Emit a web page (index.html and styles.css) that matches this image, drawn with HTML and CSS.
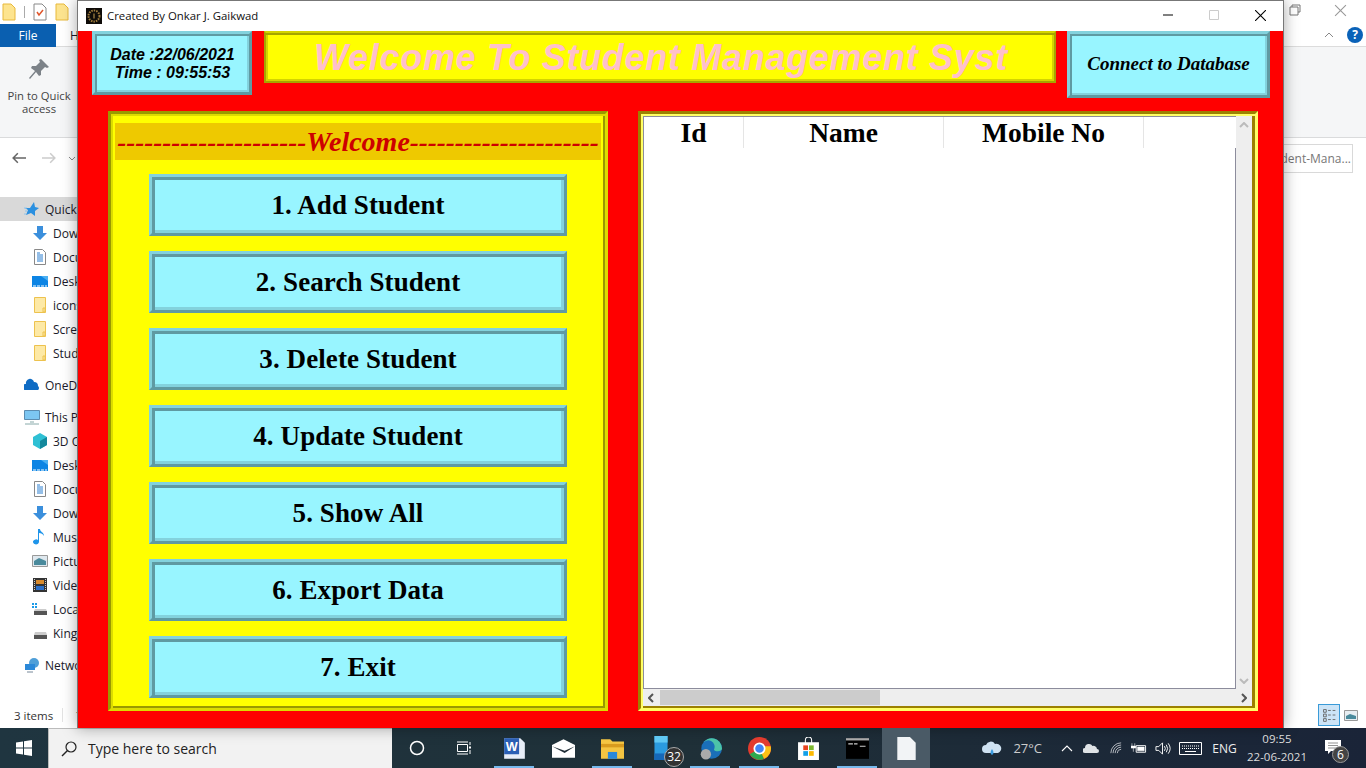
FILE: index.html
```html
<!DOCTYPE html>
<html lang="en">
<head>
    <meta charset="UTF-8">
    <title>Student Management System</title>
    <link rel="stylesheet" href="styles.css">
</head>
<body>
    <div class="desktop">
        <!-- explorer window behind the app -->
        <div class="explorer">
            <div class="ex-title">
                <svg class="ex-ico" viewBox="0 0 14 18"><path d="M1 1h8l4 4v12H1z" fill="#fde48f" stroke="#e8b93c"/></svg>
                <span class="ex-sep"></span>
                <svg class="ex-ico" viewBox="0 0 14 18"><path d="M1 1h8l4 4v12H1z" fill="#fff" stroke="#888"/><path d="M4 9l2 3 4-5" fill="none" stroke="#e0552b" stroke-width="1.5"/></svg>
                <svg class="ex-ico" viewBox="0 0 14 18"><path d="M1 1h8l4 4v12H1z" fill="#fde48f" stroke="#e8b93c"/></svg>
                <svg class="ex-restore" viewBox="0 0 12 12"><path d="M3 3V1h8v7H9M1 3h8v8H1z" fill="none" stroke="#777"/></svg>
                <svg class="ex-close" viewBox="0 0 12 12"><path d="M1 1l10 10M11 1L1 11" stroke="#999" fill="none"/></svg>
            </div>
            <div class="ex-tabs">
                <span class="file-tab">File</span>
                <span class="home-tab">H</span>
                <svg class="ex-up" viewBox="0 0 10 6"><path d="M1 5l4-4 4 4" fill="none" stroke="#888"/></svg>
                <svg class="ex-help" viewBox="0 0 16 16"><circle cx="8" cy="8" r="8" fill="#0a62b8"/><text x="8" y="12" text-anchor="middle" class="help-mark">?</text></svg>
            </div>
            <div class="ex-ribbon">
                <div class="pin">
                    <svg viewBox="0 0 22 22" class="pin-ico"><path d="M13 1l8 8-2 1-2-1-4 4 0 4-2 1-3-4-6 7-1-1 6-7-4-3 1-2h4l4-4-1-2z" fill="#7c8288"/></svg>
                    <span>Pin to Quick<br>access</span>
                </div>
            </div>
            <div class="ex-nav">
                <svg viewBox="0 0 12 10" class="nav-arrow"><path d="M5 1L1 5l4 4M1 5h11" fill="none" stroke="#666" stroke-width="1.3"/></svg>
                <svg viewBox="0 0 12 10" class="nav-arrow"><path d="M7 1l4 4-4 4M11 5H0" fill="none" stroke="#ccc" stroke-width="1.3"/></svg>
                <svg viewBox="0 0 8 5" class="nav-down"><path d="M1 1l3 3 3-3" fill="none" stroke="#888"/></svg>
                <span class="search-box">dent-Mana...</span>
            </div>
            <ul class="tree">
                <li class="top active"><svg viewBox="0 0 16 16"><path d="M10 1l1 5 4 1-4 3 0 5-4-3-5 2 2-5-3-2h5z" fill="#2b90e0"/><path d="M0 7h3M1 10h2M0 13h2" stroke="#8cc4ee"/></svg>Quick access</li>
                <li class="sub"><svg viewBox="0 0 16 16"><path d="M5 1h6v7h4l-7 7-7-7h4z" fill="#3b8fdc"/></svg>Downloads</li>
                <li class="sub"><svg viewBox="0 0 16 16"><path d="M2.500 .5h8l3 3v12h-11z" fill="#fff" stroke="#888"/><path d="M5 4h3M5 6h6M5 8h6M5 10h6M5 12h6" stroke="#2b7fd0"/></svg>Documents</li>
                <li class="sub"><svg viewBox="0 0 16 16"><path d="M0 3h16v11H0z" fill="#0c84e4"/><path d="M1 13h14" stroke="#fff" stroke-dasharray="3 1"/><path d="M9 3h7v5z" fill="#4cb0f2"/></svg>Desktop</li>
                <li class="sub"><svg viewBox="0 0 16 16"><path d="M2.500 .5h11v15h-11z" fill="#fde9a6" stroke="#edc24e"/><path d="M11 11h2v4h-2z" fill="none" stroke="#edc24e"/></svg>icons</li>
                <li class="sub"><svg viewBox="0 0 16 16"><path d="M2.500 .5h11v15h-11z" fill="#fde9a6" stroke="#edc24e"/><path d="M11 11h2v4h-2z" fill="none" stroke="#edc24e"/></svg>Screenshots</li>
                <li class="sub"><svg viewBox="0 0 16 16"><path d="M2.500 .5h11v15h-11z" fill="#fde9a6" stroke="#edc24e"/><path d="M11 11h2v4h-2z" fill="none" stroke="#edc24e"/></svg>Student</li>
                <li class="top gap"><svg viewBox="0 0 16 16"><path d="M1 13a3 3 0 0 1 1-6 4 4 0 0 1 8-2 4 4 0 0 1 4 4 2.500 2.500 0 0 1 0 4z" fill="#0f6cc4"/></svg>OneDrive</li>
                <li class="top gap"><svg viewBox="0 0 16 16"><path d="M.5 1.500h15v9H.5z" fill="#7cc6f2" stroke="#5c8cb0"/><path d="M6 13h4M1 15h14" stroke="#8aa"/></svg>This PC</li>
                <li class="sub"><svg viewBox="0 0 16 16"><path d="M8 0l7 4v8l-7 4-7-4V4z" fill="#2fc0d4"/><path d="M8 8l7-4v8l-7 4z" fill="#14889c"/></svg>3D Objects</li>
                <li class="sub"><svg viewBox="0 0 16 16"><path d="M0 3h16v11H0z" fill="#0c84e4"/><path d="M1 13h14" stroke="#fff" stroke-dasharray="3 1"/><path d="M9 3h7v5z" fill="#4cb0f2"/></svg>Desktop</li>
                <li class="sub"><svg viewBox="0 0 16 16"><path d="M2.500 .5h8l3 3v12h-11z" fill="#fff" stroke="#888"/><path d="M5 4h3M5 6h6M5 8h6M5 10h6M5 12h6" stroke="#2b7fd0"/></svg>Documents</li>
                <li class="sub"><svg viewBox="0 0 16 16"><path d="M5 1h6v7h4l-7 7-7-7h4z" fill="#3b8fdc"/></svg>Downloads</li>
                <li class="sub"><svg viewBox="0 0 16 16"><path d="M7 13a3 2.500 0 1 1-1-2V0h2c0 3 4 3 4 7-1-2-3-3-5-3z" fill="#1f95ea"/></svg>Music</li>
                <li class="sub"><svg viewBox="0 0 16 16"><path d="M.5 2.500h15v11H.5z" fill="#dfe8ee" stroke="#999"/><path d="M2 8l5-3 7 3v4H2z" fill="#4a8a9c"/></svg>Pictures</li>
                <li class="sub"><svg viewBox="0 0 16 16"><path d="M1 1h14v14H1z" fill="#333"/><path d="M4 3h8v4H4z" fill="#d98a2b"/><path d="M4 9h8v4H4z" fill="#2b6fc8"/><path d="M2.500 2v12M13.500 2v12" stroke="#ccc" stroke-dasharray="1 1"/></svg>Videos</li>
                <li class="sub"><svg viewBox="0 0 16 16"><path d="M0 2h2v2H0zM3 2h2v2H3zM0 5h2v2H0zM3 5h2v2H3z" fill="#1c9be8"/><path d="M2 10h13v4H2z" fill="#555"/><path d="M3 8h11l1 2H2z" fill="#ccc"/></svg>Local Disk</li>
                <li class="sub"><svg viewBox="0 0 16 16"><path d="M2 10h13v4H2z" fill="#555"/><path d="M3 7h11l1 3H2z" fill="#ccc"/></svg>Kingston</li>
                <li class="top gap"><svg viewBox="0 0 16 16"><circle cx="10" cy="6" r="5" fill="#4f9fd8"/><path d="M1 7h10v6H1z" fill="#2b88d8"/><path d="M3 15h6" stroke="#789"/></svg>Network</li>
            </ul>
            <div class="ex-status">
                <span>3 items</span><span class="status-sep">1</span>
                <div class="views">
                    <svg class="view on" viewBox="0 0 22 22"><path d="M5 5h3v3H5zM5 10h3v3H5zM5 15h3v3H5z" fill="none" stroke="#666"/><path d="M10 6h3M15 6h3M10 11h3M15 11h3M10 16h3M15 16h3" stroke="#666"/></svg>
                    <svg class="view" viewBox="0 0 14 11"><path d="M.5 .5h13v10H.5z" fill="#e8eef2" stroke="#999"/><path d="M2 6l4-2 6 2v3H2z" fill="#4a8a9c"/></svg>
                </div>
            </div>
        </div>

        <!-- student management window -->
        <div class="app">
            <div class="app-title">
                <svg class="app-logo" viewBox="0 0 16 16"><path d="M0 0h16v16H0z" fill="#0e0b08"/><circle cx="8" cy="8" r="5.500" fill="none" stroke="#a07c3c" stroke-width="2" stroke-dasharray="1.500 1"/><path d="M8 5.500v5" stroke="#c8a050"/></svg>
                <span class="app-name">Created By Onkar J. Gaikwad</span>
                <div class="win-btns">
                    <svg viewBox="0 0 10 10" class="win-btn"><path d="M0 5h10" stroke="#000"/></svg>
                    <svg viewBox="0 0 10 10" class="win-btn"><path d="M.5 .5h9v9h-9z" fill="none" stroke="#ccc"/></svg>
                    <svg viewBox="0 0 10 10" class="win-btn"><path d="M0 0l10 10M10 0L0 10" stroke="#000" fill="none"/></svg>
                </div>
            </div>
            <div class="app-body">
                <header class="top-row">
                    <div class="ridge date-box">Date :22/06/2021<br>Time : 09:55:53</div>
                    <div class="heading"><span class="heading-text">Welcome To Student Management Syst</span></div>
                    <div class="ridge connect">Connect to Database</div>
                </header>
                <main class="panels">
                    <section class="panel menu">
                        <div class="menu-title"><span class="dashes">---------------------</span>Welcome<span class="dashes">---------------------</span></div>
                        <div class="ridge btn">1. Add Student</div>
                        <div class="ridge btn">2. Search Student</div>
                        <div class="ridge btn">3. Delete Student</div>
                        <div class="ridge btn">4. Update Student</div>
                        <div class="ridge btn">5. Show All</div>
                        <div class="ridge btn">6. Export Data</div>
                        <div class="ridge btn">7. Exit</div>
                    </section>
                    <section class="panel records">
                        <div class="grid-row">
                            <div class="table">
                                <div class="thead">
                                    <div class="th">Id</div>
                                    <div class="th wide">Name</div>
                                    <div class="th wide">Mobile No</div>
                                </div>
                                <div class="tbody"></div>
                            </div>
                            <div class="vscroll">
                                <svg viewBox="0 0 10 6" class="chev"><path d="M1 5l4-4 4 4" fill="none" stroke="#bbb" stroke-width="2"/></svg>
                                <svg viewBox="0 0 10 6" class="chev"><path d="M1 1l4 4 4-4" fill="none" stroke="#bbb" stroke-width="2"/></svg>
                            </div>
                        </div>
                        <div class="hscroll">
                            <svg viewBox="0 0 6 10" class="chev-h"><path d="M5 1L1 5l4 4" fill="none" stroke="#555" stroke-width="2"/></svg>
                            <div class="hthumb"></div>
                            <svg viewBox="0 0 6 10" class="chev-h end"><path d="M1 1l4 4-4 4" fill="none" stroke="#555" stroke-width="2"/></svg>
                        </div>
                    </section>
                </main>
            </div>
        </div>

        <!-- taskbar -->
        <footer class="taskbar">
            <div class="start"><svg viewBox="0 0 16 16" class="win-logo"><path d="M0 2.500l7-1v6H0zM8 1.300L16 0v7.500H8zM0 8.500h7v6l-7-1zM8 8.500h8V16l-8-1.200z" fill="#fff"/></svg></div>
            <div class="search">
                <svg viewBox="0 0 16 16" class="search-ico"><circle cx="10" cy="6" r="5" fill="none" stroke="#222" stroke-width="1.200"/><path d="M6.500 9.500L1 15" stroke="#222" stroke-width="1.400"/></svg>
                <span>Type here to search</span>
            </div>
            <div class="task-icons">
                <div class="task"><svg viewBox="0 0 16 16" class="t-ico"><circle cx="8" cy="8" r="6.500" fill="none" stroke="#fff" stroke-width="1.500"/></svg></div>
                <div class="task"><svg viewBox="0 0 16 16" class="t-ico task-view"><path d="M1.500 4.500h10v7h-10zM1 2h11M1 14h11M14 2v3M14 10v4" fill="none" stroke="#fff"/><path d="M13 6.500h2v2h-2z" fill="#fff"/></svg></div>
                <div class="task open"><svg viewBox="0 0 20 20" class="t-ico big"><path d="M1 1h14l4 4v14H1z" fill="#e8eef8"/><path d="M1 1h13v14H1z" fill="#2b5fb4"/><text x="7.500" y="12" text-anchor="middle" class="word-mark">W</text></svg></div>
                <div class="task"><svg viewBox="0 0 20 16" class="t-ico big"><path d="M0 5l10-5 10 5v11H0z" fill="#fff"/><path d="M0 6l11 4 9-4-9 6z" fill="#1f2d36"/></svg></div>
                <div class="task open split"><svg viewBox="0 0 20 18" class="t-ico big"><path d="M0 1h8l2 2h10v15H0z" fill="#f4c542"/><path d="M0 5h20v3H0z" fill="#d89b1e"/><path d="M6 12h8v6H6z" fill="#2b88d8"/></svg></div>
                <div class="task phone"><svg viewBox="0 0 12 22" class="phone-ico"><path d="M0 0h12v22H0z" fill="#2b9be0"/><path d="M0 0h12v6H0z" fill="#60c8f4"/><path d="M0 16h12v6H0z" fill="#1668b8"/></svg><span class="count">32</span></div>
                <div class="task open"><svg viewBox="0 0 20 20" class="t-ico big"><circle cx="11" cy="10" r="9" fill="#1a6fb8"/><path d="M3 6a9 9 0 0 1 17 4c0 3-6 3-7 1a4 4 0 0 0-10-5z" fill="#4cc4a8"/><circle cx="6" cy="15" r="4.500" fill="#aaa"/></svg></div>
                <div class="task open"><svg viewBox="0 0 20 20" class="t-ico big"><circle cx="10" cy="10" r="10" fill="#e33b2e"/><path d="M10 10L1.500 15A10 10 0 0 0 14 19z" fill="#2da94f"/><path d="M10 10l4 9A10 10 0 0 0 19.800 8H10z" fill="#fbc116"/><circle cx="10" cy="10" r="4.500" fill="#4285f4" stroke="#fff" stroke-width="1.500"/></svg></div>
                <div class="task"><svg viewBox="0 0 20 22" class="t-ico big"><path d="M7 6V3a3 3 0 0 1 6 0v3" fill="none" stroke="#fff"/><path d="M0 5h20v17H0z" fill="#fff"/><path d="M5 8h4.500v4.500H5z" fill="#e8431f"/><path d="M10.500 8H15v4.500h-4.500z" fill="#7cb82f"/><path d="M5 13.500h4.500V18H5z" fill="#14a0e8"/><path d="M10.500 13.500H15V18h-4.500z" fill="#fdb900"/></svg></div>
                <div class="task open"><svg viewBox="0 0 20 18" class="t-ico big"><path d="M0 0h20v18H0z" fill="#000"/><path d="M0 0h20v2H0z" fill="#aaa"/><path d="M2 5h4M7 5h3M12 7h5" stroke="#ccc"/></svg></div>
                <div class="task current"><svg viewBox="0 0 16 20" class="t-ico big"><path d="M0 0h11l5 5v15H0z" fill="#f2f4f6"/></svg></div>
            </div>
            <div class="tray">
                <svg viewBox="0 0 20 16" class="tray-ico cloud"><path d="M4 13a4 4 0 0 1 0-8 5 5 0 0 1 9-1 4.500 4.500 0 0 1 3 9z" fill="#cfe2f2"/><path d="M10 9c2 3 2 5 0 6-2-1-2-3 0-6z" fill="#3a9be0"/></svg>
                <span class="temp">27°C</span>
                <svg viewBox="0 0 12 7" class="tray-ico caret"><path d="M1 6l5-5 5 5" fill="none" stroke="#fff" stroke-width="1.100"/></svg>
                <svg viewBox="0 0 16 10" class="tray-ico onedrive"><path d="M2 10a2.500 2.500 0 0 1 0-5 4 4 0 0 1 7.500-2A3.500 3.500 0 0 1 14 6a2 2 0 0 1 0 4z" fill="#dfe3e6"/></svg>
                <svg viewBox="0 0 14 14" class="tray-ico wifi"><path d="M1 13a12 12 0 0 1 12-12M3.500 13A9.500 9.500 0 0 1 13 3.500M6 13a7 7 0 0 1 7-7M8.500 13A4.500 4.500 0 0 1 13 8.500" fill="none" stroke="#c8ccd0"/></svg>
                <svg viewBox="0 0 17 12" class="tray-ico battery"><path d="M5.500 3.500h10v7h-10z" fill="none" stroke="#fff"/><path d="M7 5h7v4H7zM1 1v3M4 1v3M0 4h5v2H0zM2.500 6v4" fill="#fff" stroke="#fff" stroke-width=".6"/></svg>
                <svg viewBox="0 0 17 13" class="tray-ico speaker"><path d="M1 4.500h3l4-4v12l-4-4H1z" fill="none" stroke="#fff"/><path d="M10 4a4 4 0 0 1 0 5M12 2.500a7 7 0 0 1 0 8M14 1a9 9 0 0 1 0 11" fill="none" stroke="#fff"/></svg>
                <svg viewBox="0 0 23 13" class="tray-ico keyboard"><path d="M.5 .5h22v12H.5z" fill="none" stroke="#fff"/><path d="M3 4h17M3 6.500h17" stroke="#fff" stroke-dasharray="1 1"/><path d="M6 9.500h11" stroke="#fff"/></svg>
                <span class="lang">ENG</span>
                <div class="clock"><span>09:55</span><span>22-06-2021</span></div>
                <div class="notify">
                    <svg viewBox="0 0 16 14" class="note"><path d="M0 0h16v11H6l-3 3v-3H0z" fill="#fff"/><path d="M3 3h10M3 5.500h10M3 8h10" stroke="#666" stroke-width=".7"/></svg>
                    <span class="badge">6</span>
                </div>
            </div>
        </footer>
    </div>
</body>
</html>
```

FILE: styles.css
```css
* {
    box-sizing: border-box;
}

html, body {
    margin: 0;
    height: 100%;
}

body {
    font-family: "Open Sans", "Noto Sans", sans-serif;
    overflow: hidden;
}

.desktop {
    position: relative;
    width: 1366px;
    height: 768px;
    overflow: hidden;
    display: flex;
    flex-direction: column;
}

/* explorer behind */
.explorer {
    flex: 1;
    height: 728px;
    background: #fff;
    font-size: 12px;
    color: #1a1a2a;
    display: flex;
    flex-direction: column;
    min-height: 0;
}

.ex-title {
    height: 24px;
    display: flex;
    align-items: center;
    padding-left: 2px;
    gap: 8px;
    background: #fff;
}

.ex-ico {
    width: 14px;
    height: 18px;
}

.ex-sep {
    width: 1px;
    height: 12px;
    background: #aaa;
}

.ex-restore {
    width: 12px;
    height: 12px;
    margin-left: auto;
    margin-bottom: 4px;
}

.ex-close {
    width: 13px;
    height: 13px;
    margin: 0 19px 4px 25px;
}

.ex-tabs {
    height: 23px;
    display: flex;
    align-items: center;
    background: #fff;
    border-bottom: 1px solid #dcdcdc;
}

.file-tab {
    width: 56px;
    height: 23px;
    background: #0a5fb0;
    color: #fff;
    text-align: center;
    line-height: 23px;
}

.home-tab {
    margin-left: 14px;
}

.ex-up {
    width: 10px;
    height: 6px;
    margin-left: auto;
    margin-right: 13px;
}

.ex-help {
    width: 16px;
    height: 16px;
    margin-right: 3px;
}

.help-mark {
    font-size: 12px;
    font-weight: bold;
    fill: #fff;
}

.ex-ribbon {
    height: 91px;
    background: #f5f6f7;
    border-bottom: 1px solid #dadbdc;
}

.pin {
    width: 78px;
    text-align: center;
    font-size: 11.300px;
    line-height: 13px;
    color: #444;
    padding-top: 11px;
}

.pin-ico {
    display: block;
    width: 22px;
    height: 22px;
    margin: 0 auto 9px;
}

.ex-nav {
    height: 59px;
    display: flex;
    align-items: center;
    padding: 0 13px 19px 12px;
    gap: 16px;
}

.nav-arrow {
    width: 14px;
    height: 12px;
}

.nav-down {
    width: 8px;
    height: 5px;
    margin-left: -4px;
}

.search-box {
    margin-left: auto;
    width: 92px;
    height: 29px;
    border: 1px solid #d9d9d9;
    color: #777;
    line-height: 27px;
    font-size: 12px;
    text-align: right;
    padding-right: 1px;
}

.tree {
    list-style: none;
    margin: 0;
    padding: 0;
    flex: 1;
    width: 200px;
}

.tree li {
    height: 24px;
    display: flex;
    align-items: center;
    white-space: nowrap;
    overflow: hidden;
}

.tree svg {
    width: 16px;
    height: 16px;
    flex: none;
}

.tree .top {
    padding-left: 24px;
    gap: 5px;
}

.tree .sub {
    padding-left: 32px;
    gap: 5px;
}

.tree .active {
    background: #d9d9d9;
}

.tree .gap {
    margin-top: 8px;
}

.ex-status {
    height: 24px;
    display: flex;
    align-items: center;
    padding-left: 14px;
    margin-bottom: 1px;
    font-size: 11.500px;
    color: #333;
}

.status-sep {
    margin-left: 9px;
    padding-left: 12px;
    border-left: 1px solid #e3e3e3;
    line-height: 14px;
}

.views {
    margin-left: auto;
    display: flex;
    align-items: center;
    gap: 4px;
    padding-right: 8px;
}

.view {
    width: 14px;
    height: 11px;
}

.view.on {
    width: 22px;
    height: 22px;
    background: #cce4f7;
    border: 1px solid #3a9bd8;
}

/* app window */
.app {
    position: absolute;
    left: 77px;
    top: 0;
    width: 1207px;
    height: 728px;
    display: flex;
    flex-direction: column;
    box-shadow: 0 0 14px rgba(0, 0, 0, 0.35);
    border: 1px solid #777;
    border-bottom: 0;
}

.app-title {
    height: 30px;
    flex: none;
    background: #fff;
    display: flex;
    align-items: center;
    padding: 0 0 1px 8px;
    font-family: "Open Sans", sans-serif;
    font-size: 11.400px;
    color: #111;
}

.app-logo {
    width: 16px;
    height: 16px;
    margin-right: 5px;
}

.win-btns {
    margin-left: auto;
    display: flex;
    margin-right: -1px;
}

.win-btn {
    width: 10px;
    height: 10px;
    margin: 0 18px;
}

.win-btn:last-child {
    margin-right: 18px;
    width: 11px;
    height: 11px;
}

.app-body {
    flex: 1;
    background: #f00;
    padding: 0 13px 17px 14px;
    display: flex;
    flex-direction: column;
    min-height: 0;
}

.ridge {
    background: #98f5ff;
    color: #000;
    border: 3px solid;
    border-color: #83d2dd #5f9aa2 #5f9aa2 #83d2dd;
    box-shadow: inset 2px 2px 0 #5f9aa2, inset -2px -2px 0 #83d2dd;
    display: flex;
    align-items: center;
    justify-content: center;
    text-align: center;
}

.top-row {
    display: flex;
    align-items: flex-start;
    height: 80px;
    flex: none;
}

.date-box {
    width: 160px;
    height: 64px;
    padding: 2px 0 0 1px;
    font: italic bold 16px/18px "Liberation Sans", sans-serif;
}

.heading {
    width: 792px;
    height: 52px;
    margin-left: 12px;
    padding: 2px 0 0 2px;
    background: #ff0;
    border: 2px solid #a5a500;
    border-top-color: #d4d400;
    box-shadow: inset 0 2px 0 #a5a500, inset 0 -2px 0 #d4d400, inset 2px 0 0 #d4d400, inset -2px 0 0 #d4d400;
    overflow: hidden;
    white-space: nowrap;
    display: flex;
    justify-content: center;
    align-items: center;
}

.heading-text {
    font: italic bold 36px "Liberation Sans", sans-serif;
    color: #ffc0cb;
    letter-spacing: 0.700px;
}

.connect {
    width: 203px;
    height: 67px;
    margin-left: 11px;
    padding-bottom: 2px;
    font: italic bold 19px "Liberation Serif", serif;
}

.panels {
    display: flex;
    gap: 30px;
    height: 600px;
    padding-left: 16px;
}

.panel {
    height: 600px;
    background: #ff0;
    border: 3px solid;
    border-color: var(--dark) var(--light) var(--light) var(--dark);
    box-shadow: inset 2px 2px 0 var(--light), inset -2px -2px 0 var(--dark);
}

.menu {
    --dark: #999900;
    --light: #dcdc00;
    width: 500px;
    padding: 9px 4px 0;
    display: flex;
    flex-direction: column;
    align-items: center;
}

.menu-title {
    width: 486px;
    height: 37px;
    flex: none;
    background: #eec900;
    color: #cd0000;
    font: italic bold 28px/37px "Liberation Serif", serif;
    text-align: center;
    white-space: nowrap;
    margin-bottom: 14px;
}

.dashes {
    font-size: 27px;
}

.btn {
    width: 418px;
    height: 62px;
    flex: none;
    margin-bottom: 15px;
    box-shadow: inset 3px 3px 0 #5f9aa2, inset -3px -3px 0 #83d2dd;
    font: bold 27px "Liberation Serif", serif;
    letter-spacing: 0.100px;
}

.records {
    --dark: #9c8000;
    --light: #ffff66;
    width: 620px;
    padding: 2px 3px 2px 2px;
    display: flex;
    flex-direction: column;
    background: #ffff66;
    box-shadow: inset 2px 2px 0 #ffff66, inset -3px -2px 0 #9c8000;
}

.grid-row {
    flex: 1;
    display: flex;
    min-height: 0;
}

.table {
    flex: 1;
    background: #fff;
    border: 1px solid #8c8c9c;
    border-width: 1px 0 1px 1px;
    display: flex;
    flex-direction: column;
    min-width: 0;
}

.thead {
    display: flex;
    height: 31px;
    flex: none;
}

.th {
    width: 100px;
    border-right: 1px solid #e5e5e5;
    text-align: center;
    font: bold 27.500px/31px "Liberation Serif", serif;
    color: #000;
}

.th.wide {
    width: 200px;
}

.tbody {
    flex: 1;
    border-right: 1px solid #8c8c9c;
}

.vscroll {
    width: 16px;
    flex: none;
    background: #eee;
    display: flex;
    flex-direction: column;
    justify-content: space-between;
    align-items: center;
    padding: 6px 0 5px;
}

.chev {
    width: 10px;
    height: 6px;
}

.hscroll {
    height: 17px;
    flex: none;
    background: #eee;
    display: flex;
    align-items: center;
    padding: 0 5px;
}

.chev-h {
    width: 6px;
    height: 10px;
}

.chev-h.end {
    margin-left: auto;
}

.hthumb {
    width: 220px;
    height: 15px;
    background: #ccc;
    margin-left: 6px;
}

/* taskbar */
.taskbar {
    height: 40px;
    flex: none;
    background: linear-gradient(90deg, #1f3540 0%, #1f3038 50%, #1a2438 100%);
    display: flex;
    align-items: stretch;
    color: #fff;
}

.start {
    width: 48px;
    display: flex;
    align-items: center;
    justify-content: center;
}

.win-logo {
    width: 16px;
    height: 16px;
}

.search {
    width: 344px;
    background: #f2f2f2;
    color: #222;
    display: flex;
    align-items: center;
    padding-left: 12px;
    gap: 11px;
    font-size: 14px;
    border: 1px solid #bbb;
    border-width: 1px 0 0 1px;
}

.search-ico {
    width: 16px;
    height: 16px;
}

.task-icons {
    display: flex;
}

.task {
    width: 49px;
    display: flex;
    align-items: center;
    justify-content: center;
    position: relative;
}

.task.open::after {
    content: "";
    position: absolute;
    left: 4px;
    right: 5px;
    bottom: 0;
    height: 2px;
    background: #76b9ed;
}

.task.current {
    background: #4a5a66;
    width: 48px;
}

.t-ico {
    width: 16px;
    height: 16px;
}

.t-ico.big {
    width: 23px;
    height: 23px;
}

.task-view {
    margin-right: 3px;
}

.word-mark {
    font: bold 11px "Liberation Sans", sans-serif;
    fill: #fff;
}

.phone-ico {
    width: 14px;
    height: 24px;
    margin-right: 2px;
}

.count {
    position: absolute;
    left: 27px;
    top: 19px;
    width: 20px;
    height: 20px;
    border-radius: 50%;
    background: #333;
    border: 1px solid #aaa;
    font-size: 12px;
    line-height: 18px;
    text-align: center;
}

.tray {
    margin-left: auto;
    display: flex;
    align-items: center;
    position: relative;
}

.tray-ico {
    flex: none;
}

.cloud {
    width: 20px;
    height: 16px;
}

.temp {
    font-size: 13px;
    margin: 0 19px 0 11px;
    color: #ccc;
}

.caret {
    width: 12px;
    height: 7px;
    margin-right: 10px;
}

.onedrive {
    width: 16px;
    height: 10px;
    margin-right: 11px;
}

.wifi {
    width: 12px;
    height: 12px;
    margin-right: 9px;
}

.battery {
    width: 16px;
    height: 12px;
    margin-right: 8px;
}

.speaker {
    width: 16px;
    height: 13px;
    margin-right: 8px;
}

.keyboard {
    width: 23px;
    height: 13px;
    margin-right: 5px;
}

.lang {
    font-size: 12px;
    width: 35px;
    text-align: center;
    color: #eee;
}

.clock {
    width: 70px;
    margin-right: 10px;
    display: flex;
    flex-direction: column;
    align-items: center;
    font-size: 11.500px;
    line-height: 18px;
    color: #ddd;
}

.notify {
    width: 44px;
    height: 40px;
    position: relative;
    padding: 12px 0 0 3px;
}

.note {
    width: 16px;
    height: 14px;
    display: block;
}

.badge {
    position: absolute;
    left: 10px;
    top: 18px;
    width: 17px;
    height: 17px;
    border-radius: 50%;
    background: #444;
    border: 1px solid #999;
    font-size: 12px;
    line-height: 15px;
    text-align: center;
}
```
